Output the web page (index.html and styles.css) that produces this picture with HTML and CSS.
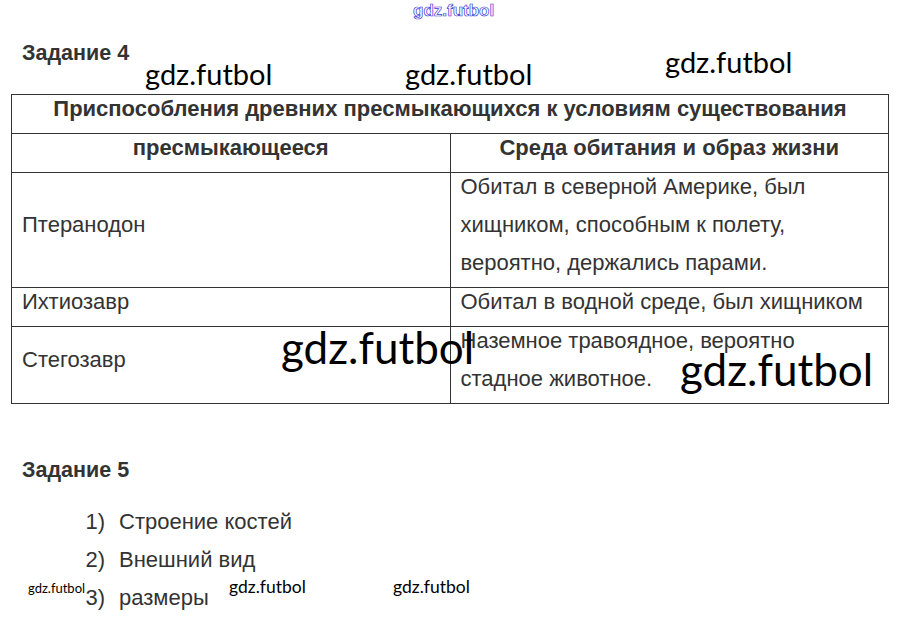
FILE: index.html
```html
<!DOCTYPE html>
<html lang="ru">
<head>
<meta charset="utf-8">
<title>Задание 4–5</title>
<link rel="stylesheet" href="styles.css">
</head>
<body>
<div class="page">
  <div class="wm-top">gdz.futbol</div>

  <h2 class="task task-4">Задание 4</h2>

  <table class="grid">
    <tr class="row-title">
      <th colspan="2"><div class="cell-text">Приспособления древних пресмыкающихся к условиям существования</div></th>
    </tr>
    <tr class="row-head">
      <th class="col-a"><div class="cell-text">пресмыкающееся</div></th>
      <th class="col-b"><div class="cell-text">Среда обитания и образ жизни</div></th>
    </tr>
    <tr class="row-3">
      <td><div class="cell-text">Птеранодон</div></td>
      <td><div class="cell-text">Обитал в северной Америке, был хищником, способным к полету, вероятно, держались парами.</div></td>
    </tr>
    <tr class="row-1">
      <td><div class="cell-text">Ихтиозавр</div></td>
      <td><div class="cell-text">Обитал в водной среде, был хищником</div></td>
    </tr>
    <tr class="row-2">
      <td><div class="cell-text">Стегозавр</div></td>
      <td><div class="cell-text">Наземное травоядное, вероятно стадное животное.</div></td>
    </tr>
  </table>

  <h2 class="task task-5">Задание 5</h2>

  <ol class="answers">
    <li><span class="num">1)</span><span>Строение костей</span></li>
    <li><span class="num">2)</span><span>Внешний вид</span></li>
    <li><span class="num">3)</span><span>размеры</span></li>
  </ol>

  <div class="wm wm-m wm1">gdz.futbol</div>
  <div class="wm wm-m wm2">gdz.futbol</div>
  <div class="wm wm-m wm3">gdz.futbol</div>
  <div class="wm wm-l wm4">gdz.futbol</div>
  <div class="wm wm-l wm5">gdz.futbol</div>
  <div class="wm wm-xs wm6">gdz.futbol</div>
  <div class="wm wm-s wm7">gdz.futbol</div>
  <div class="wm wm-s wm8">gdz.futbol</div>
</div>
</body>
</html>
```

FILE: styles.css
```css
html, body {
  margin: 0;
  padding: 0;
  background: #ffffff;
}

body {
  font-family: "Liberation Sans", Arial, sans-serif;
  color: #333333;
}

.page {
  position: relative;
  width: 906px;
  height: 626px;
  padding: 40px 0 0 11px;
  box-sizing: border-box;
}

.task {
  margin: 0 0 0 11px;
  font-size: 21.5px;
  font-weight: bold;
  line-height: 26px;
  height: 26px;
}

.task-4 {
  margin-bottom: 28px;
}

.task-5 {
  margin-top: 53px;
}

.grid {
  border-collapse: collapse;
  width: 878px;
  table-layout: fixed;
}

.grid th,
.grid td {
  border: 1px solid #333333;
  padding: 0 10px;
  font-size: 22px;
  line-height: 38px;
  vertical-align: middle;
}

.cell-text {
  margin: -5px 0 5px;
}

.grid th {
  font-weight: bold;
  text-align: center;
  font-size: 22px;
}

.grid td {
  text-align: left;
}

.col-a {
  width: 437px;
  box-sizing: border-box;
}

.row-title th,
.row-head th {
  height: 38px;
  padding: 0;
}

.row-3 td {
  height: 114px;
}

.row-1 td {
  height: 37px;
}

.row-2 td {
  height: 76px;
}

.answers {
  list-style: none;
  margin: 20px 0 0 0;
  padding: 0;
}

.answers li {
  display: flex;
  font-size: 22px;
  line-height: 38px;
}

.answers .num {
  width: 108px;
  text-align: right;
  padding-right: 14px;
  box-sizing: border-box;
}

.wm-top {
  position: absolute;
  left: 413px;
  top: 1px;
  font-family: "Liberation Sans", Arial, sans-serif;
  font-size: 17px;
  font-weight: bold;
  color: #ffffff;
  -webkit-text-stroke: 0.7px #3a3ad8;
}

.wm {
  position: absolute;
  font-family: Lato, "Open Sans", sans-serif;
  color: #000000;
  line-height: 1;
  white-space: nowrap;
}

.wm-m { font-size: 29px; }
.wm-l { font-size: 44px; }
.wm-s { font-size: 17.5px; }
.wm-xs { font-size: 13px; }

.wm1 { left: 145px; top: 59px; }
.wm2 { left: 405px; top: 59px; }
.wm3 { left: 665px; top: 47px; }
.wm4 { left: 281px; top: 325px; }
.wm5 { left: 680px; top: 347px; }
.wm6 { left: 28px; top: 582px; }
.wm7 { left: 229px; top: 578px; }
.wm8 { left: 393px; top: 578px; }
```
